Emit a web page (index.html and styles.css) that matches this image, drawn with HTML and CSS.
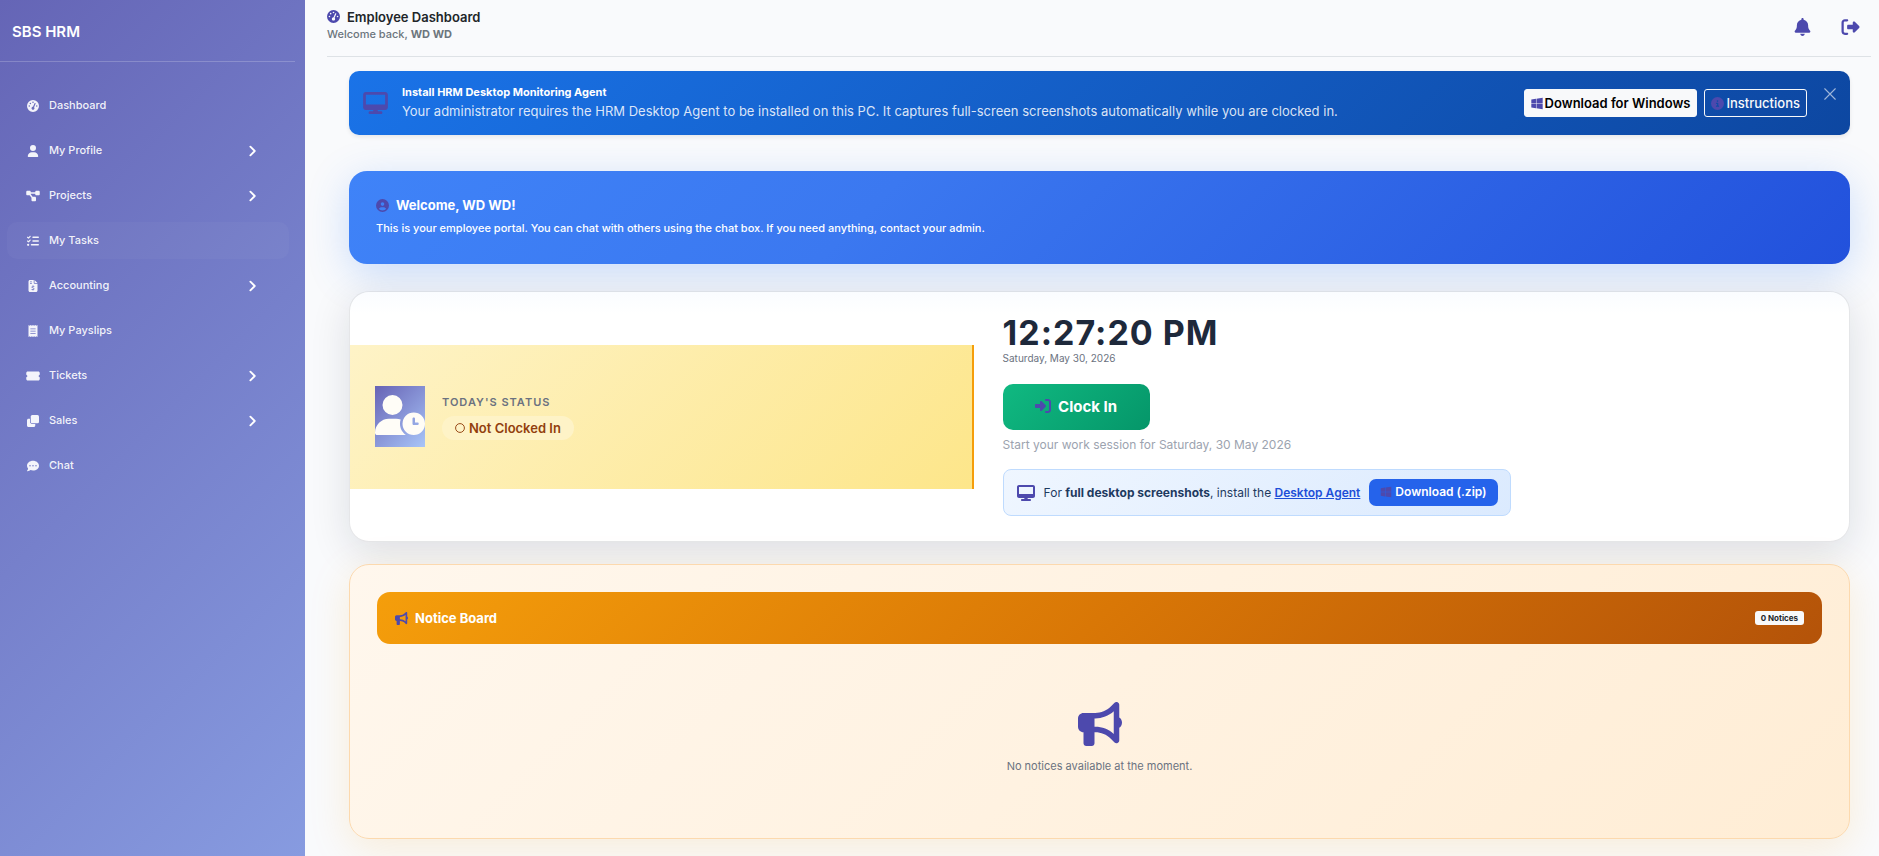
FILE: index.html
```html
<!DOCTYPE html>
<html lang="en">
<head>
    <meta charset="UTF-8">
    <meta name="viewport" content="width=device-width, initial-scale=1.0">
    <title>Employee Dashboard - SBS HRM</title>
    <link rel="stylesheet" href="styles.css">
</head>
<body>
    <!-- Icon sprite -->
    <svg class="sprite" aria-hidden="true">
        <symbol id="i-gauge" viewBox="0 0 512 512"><path d="M0 256a256 256 0 1 1 512 0A256 256 0 1 1 0 256zM288 96a32 32 0 1 0 -64 0 32 32 0 1 0 64 0zM256 416c35.3 0 64-28.7 64-64c0-17.4-6.9-33.1-18.1-44.6L366 161.7c5.3-12.1-.2-26.3-12.3-31.6s-26.3 .2-31.6 12.3L257.9 288c-.6 0-1.3 0-1.9 0c-35.3 0-64 28.7-64 64s28.7 64 64 64zM176 144a32 32 0 1 0 -64 0 32 32 0 1 0 64 0zM96 288a32 32 0 1 0 0-64 32 32 0 1 0 0 64zm352-32a32 32 0 1 0 -64 0 32 32 0 1 0 64 0z"/></symbol>
        <symbol id="i-user" viewBox="0 0 448 512"><path d="M224 256A128 128 0 1 0 224 0a128 128 0 1 0 0 256zm-45.7 48C79.8 304 0 383.8 0 482.3C0 498.7 13.3 512 29.7 512l388.6 0c16.4 0 29.7-13.3 29.7-29.7C448 383.8 368.2 304 269.7 304l-91.4 0z"/></symbol>
        <symbol id="i-project" viewBox="0 0 576 512"><path d="M0 80C0 53.5 21.5 32 48 32l96 0c26.5 0 48 21.5 48 48l0 16 192 0 0-16c0-26.5 21.5-48 48-48l96 0c26.5 0 48 21.5 48 48l0 96c0 26.5-21.5 48-48 48l-96 0c-26.5 0-48-21.5-48-48l0-16-192 0 0 16c0 1.7-.1 3.4-.3 5L272 288l96 0c26.5 0 48 21.5 48 48l0 96c0 26.5-21.5 48-48 48l-96 0c-26.5 0-48-21.5-48-48l0-96c0-1.7 .1-3.4 .3-5L144 224l-96 0c-26.5 0-48-21.5-48-48L0 80z"/></symbol>
        <symbol id="i-tasks" viewBox="0 0 512 512"><path d="M152.1 38.2c9.9 8.9 10.7 24 1.8 33.9l-72 80c-4.4 4.9-10.6 7.8-17.2 7.9s-12.9-2.4-17.6-7L7 113C-2.3 103.6-2.3 88.4 7 79s24.6-9.4 33.9 0l22.1 22.1 55.1-61.2c8.9-9.9 24-10.7 33.9-1.8zm0 160c9.9 8.9 10.7 24 1.8 33.9l-72 80c-4.4 4.9-10.6 7.8-17.2 7.9s-12.9-2.4-17.6-7L7 273c-9.4-9.4-9.4-24.6 0-33.9s24.6-9.4 33.9 0l22.1 22.1 55.1-61.2c8.9-9.9 24-10.7 33.9-1.8zM224 96c0-17.7 14.3-32 32-32l224 0c17.7 0 32 14.3 32 32s-14.3 32-32 32l-224 0c-17.7 0-32-14.3-32-32zm0 160c0-17.7 14.3-32 32-32l224 0c17.7 0 32 14.3 32 32s-14.3 32-32 32l-224 0c-17.7 0-32-14.3-32-32zM160 416c0-17.7 14.3-32 32-32l288 0c17.7 0 32 14.3 32 32s-14.3 32-32 32l-288 0c-17.7 0-32-14.3-32-32zM48 368a48 48 0 1 1 0 96 48 48 0 1 1 0-96z"/></symbol>
        <symbol id="i-invoice" viewBox="0 0 384 512"><path fill-rule="evenodd" d="M64 0C28.7 0 0 28.7 0 64v384c0 35.3 28.7 64 64 64h256c35.3 0 64-28.7 64-64V160H256c-17.7 0-32-14.3-32-32V0H64zM256 0v128h128L256 0zM64 64h80v32H64V64zM64 128h80v32H64v-32zM176 224h32v28h40v36h-80c-14 0-14 24 0 26l48 12c56 14 48 88-8 94v28h-32v-28h-48v-36h84c16 0 18-22 2-26l-48-12c-54-14-46-86 10-94v-28z"/></symbol>
        <symbol id="i-receipt" viewBox="0 0 384 512"><path fill-rule="evenodd" d="M0 0l48 36L96 0l48 36 48-36 48 36 48-36 48 36 48-36v512l-48-36-48 36-48-36-48 36-48-36-48 36-48-36-48 36V0zM80 144v32h224v-32H80zM80 240v32h224v-32H80zM80 336v32h224v-32H80z"/></symbol>
        <symbol id="i-ticket" viewBox="0 0 576 512"><path d="M0 128C0 92.7 28.7 64 64 64l448 0c35.3 0 64 28.7 64 64l0 64c0 8.8-7.4 15.7-15.7 18.6C541.5 217.1 528 235 528 256s13.5 38.9 32.3 45.4c8.3 2.9 15.7 9.8 15.7 18.6l0 64c0 35.3-28.7 64-64 64L64 448c-35.3 0-64-28.7-64-64l0-64c0-8.8 7.4-15.7 15.7-18.6C34.5 294.9 48 277 48 256s-13.5-38.9-32.3-45.4C7.4 207.7 0 200.8 0 192l0-64z"/></symbol>
        <symbol id="i-clone" viewBox="0 0 512 512"><rect x="160" width="352" height="352" rx="64"/><path d="M128 160H64c-35.3 0-64 28.7-64 64v224c0 35.3 28.7 64 64 64h224c35.3 0 64-28.7 64-64v-64H224c-53 0-96-43-96-96V160z"/></symbol>
        <symbol id="i-comment" viewBox="0 0 512 512"><path d="M256 448c141.4 0 256-93.1 256-208S397.4 32 256 32S0 125.1 0 240c0 45.1 17.7 86.8 47.7 120.9c-1.9 24.5-11.4 46.3-21.4 62.9c-5.5 9.2-11.1 16.6-15.2 21.6c-2.1 2.5-3.7 4.4-4.9 5.7c-4.6 4.6-7.5 12.4-5 18.7c2.5 6 8.3 9.9 14.8 9.9c28.7 0 57.6-8.9 81.6-19.3c22.9-10 42.4-21.9 54.3-30.6c31.8 11.5 67 17.9 104.1 17.9zM128 208a32 32 0 1 1 0 64 32 32 0 1 1 0-64zm128 0a32 32 0 1 1 0 64 32 32 0 1 1 0-64zm96 32a32 32 0 1 1 64 0 32 32 0 1 1 -64 0z"/></symbol>
        <symbol id="i-chevron" viewBox="0 0 320 512"><path d="M64 96l160 160L64 416" fill="none" stroke="currentColor" stroke-width="68" stroke-linecap="round" stroke-linejoin="round"/></symbol>
        <symbol id="i-desktop" viewBox="0 0 576 512"><path d="M64 0C28.7 0 0 28.7 0 64L0 352c0 35.3 28.7 64 64 64l176 0-10.7 32L160 448c-17.7 0-32 14.3-32 32s14.3 32 32 32l256 0c17.7 0 32-14.3 32-32s-14.3-32-32-32l-69.3 0L336 416l176 0c35.3 0 64-28.7 64-64l0-288c0-35.3-28.7-64-64-64L64 0zM512 64l0 224L64 288 64 64l448 0z"/></symbol>
        <symbol id="i-windows" viewBox="0 0 448 512"><path d="M0 93.7l183.6-25.3v177.4H0V93.7zm0 324.6l183.6 25.3V268.4H0v149.9zm203.8 28L448 480V268.4H203.8v177.9zm0-380.6v180.1H448V32L203.8 65.7z"/></symbol>
        <symbol id="i-info" viewBox="0 0 512 512"><path d="M256 512A256 256 0 1 0 256 0a256 256 0 1 0 0 512zM216 336l24 0 0-64-24 0c-13.3 0-24-10.7-24-24s10.7-24 24-24l48 0c13.3 0 24 10.7 24 24l0 88 8 0c13.3 0 24 10.7 24 24s-10.7 24-24 24l-80 0c-13.3 0-24-10.7-24-24s10.7-24 24-24zm40-208a32 32 0 1 1 0 64 32 32 0 1 1 0-64z"/></symbol>
        <symbol id="i-close" viewBox="0 0 16 16"><path d="M1 1l14 14M15 1L1 15" fill="none" stroke="currentColor" stroke-width="1.5" stroke-linecap="round"/></symbol>
        <symbol id="i-bell" viewBox="0 0 448 512"><path d="M224 0c-17.7 0-32 14.3-32 32l0 19.2C119 66 64 130.6 64 208l0 18.8c0 47-17.3 92.4-48.5 127.6l-7.4 8.3c-8.4 9.4-10.4 22.9-5.3 34.4S19.4 416 32 416l384 0c12.6 0 24-7.4 29.2-18.9s3.1-25-5.3-34.4l-7.4-8.3C401.3 319.2 384 273.9 384 226.8l0-18.8c0-77.4-55-142-128-156.8L256 32c0-17.7-14.3-32-32-32zm45.3 493.3c12-12 18.7-28.3 18.7-45.3l-64 0-64 0c0 17 6.7 33.3 18.7 45.3s28.3 18.7 45.3 18.7s33.3-6.7 45.3-18.7z"/></symbol>
        <symbol id="i-signout" viewBox="0 0 512 512"><path d="M377.9 105.9L500.7 228.7c7.2 7.2 11.3 17.1 11.3 27.3s-4.1 20.1-11.3 27.3L377.9 406.1c-6.4 6.4-15 9.9-24 9.9c-18.7 0-33.9-15.2-33.9-33.9l0-62.1-128 0c-17.7 0-32-14.3-32-32l0-64c0-17.7 14.3-32 32-32l128 0 0-62.1c0-18.7 15.2-33.9 33.9-33.9c9 0 17.6 3.6 24 9.9zM160 96L96 96c-17.7 0-32 14.3-32 32l0 256c0 17.7 14.3 32 32 32l64 0c17.7 0 32 14.3 32 32s-14.3 32-32 32l-64 0c-53 0-96-43-96-96L0 128C0 75 43 32 96 32l64 0c17.7 0 32 14.3 32 32s-14.3 32-32 32z"/></symbol>
        <symbol id="i-signin" viewBox="0 0 512 512"><path d="M217.9 105.9L340.7 228.7c7.2 7.2 11.3 17.1 11.3 27.3s-4.1 20.1-11.3 27.3L217.9 406.1c-6.4 6.4-15 9.9-24 9.9c-18.7 0-33.9-15.2-33.9-33.9l0-62.1L32 320c-17.7 0-32-14.3-32-32l0-64c0-17.7 14.3-32 32-32l128 0 0-62.1c0-18.7 15.2-33.9 33.9-33.9c9 0 17.6 3.6 24 9.9zM352 416l64 0c17.7 0 32-14.3 32-32l0-256c0-17.7-14.3-32-32-32l-64 0c-17.7 0-32-14.3-32-32s14.3-32 32-32l64 0c53 0 96 43 96 96l0 256c0 53-43 96-96 96l-64 0c-17.7 0-32-14.3-32-32s14.3-32 32-32z"/></symbol>
        <symbol id="i-circle-user" viewBox="0 0 512 512"><path d="M399 384.2C376.9 345.8 335.4 320 288 320l-64 0c-47.4 0-88.9 25.8-111 64.2c35.2 39.2 86.2 63.8 143 63.8s107.8-24.7 143-63.8zM0 256a256 256 0 1 1 512 0A256 256 0 1 1 0 256zm256 16a72 72 0 1 0 0-144 72 72 0 1 0 0 144z"/></symbol>
        <symbol id="i-user-clock" viewBox="0 0 640 512"><path d="M224 0a128 128 0 1 1 0 256A128 128 0 1 1 224 0zM178.3 304h91.4c20.6 0 40.4 3.5 58.8 9.9C323 331 320 349.1 320 368c0 59.5 29.5 112.1 74.8 144H29.7C13.3 512 0 498.7 0 482.3C0 383.8 79.8 304 178.3 304zM352 368a144 144 0 1 1 288 0 144 144 0 1 1-288 0zm144-80c-8.8 0-16 7.2-16 16v64c0 8.8 7.2 16 16 16h48c8.8 0 16-7.2 16-16s-7.2-16-16-16H512V304c0-8.8-7.2-16-16-16z"/></symbol>
        <symbol id="i-circle" viewBox="0 0 512 512"><circle cx="256" cy="256" r="226" fill="none" stroke="currentColor" stroke-width="48"/></symbol>
        <symbol id="i-bullhorn" viewBox="0 0 512 512"><path d="M480 32c0-12.9-7.8-24.6-19.8-29.6s-25.7-2.2-34.9 6.9L381.7 53c-48 48-113.1 75-181 75l-8.7 0-32 0-96 0c-35.3 0-64 28.7-64 64l0 96c0 35.3 28.7 64 64 64l0 128c0 17.7 14.3 32 32 32l64 0c17.7 0 32-14.3 32-32l0-128 8.7 0c67.9 0 133 27 181 75l43.6 43.6c9.2 9.2 22.9 11.9 34.9 6.9s19.8-16.6 19.8-29.6l0-147.6c18.6-8.8 32-32.5 32-60.4s-13.4-51.6-32-60.4L480 32zm-64 76.7L416 240l0 131.3C357.2 317.8 280.5 288 200.7 288l-8.7 0 0-96 8.7 0c79.8 0 156.5-29.8 215.3-83.3z"/></symbol>
    </svg>

    <div class="layout">
        <aside class="sidebar">
            <div class="brand">SBS HRM</div>
            <nav class="menu">
                <a href="#"><svg class="icon"><use href="#i-gauge"/></svg><span>Dashboard</span></a>
                <a href="#"><svg class="icon"><use href="#i-user"/></svg><span>My Profile</span><svg class="arrow"><use href="#i-chevron"/></svg></a>
                <a href="#"><svg class="icon"><use href="#i-project"/></svg><span>Projects</span><svg class="arrow"><use href="#i-chevron"/></svg></a>
                <a href="#" class="active"><svg class="icon"><use href="#i-tasks"/></svg><span>My Tasks</span></a>
                <a href="#"><svg class="icon"><use href="#i-invoice"/></svg><span>Accounting</span><svg class="arrow"><use href="#i-chevron"/></svg></a>
                <a href="#"><svg class="icon"><use href="#i-receipt"/></svg><span>My Payslips</span></a>
                <a href="#"><svg class="icon"><use href="#i-ticket"/></svg><span>Tickets</span><svg class="arrow"><use href="#i-chevron"/></svg></a>
                <a href="#"><svg class="icon"><use href="#i-clone"/></svg><span>Sales</span><svg class="arrow"><use href="#i-chevron"/></svg></a>
                <a href="#"><svg class="icon"><use href="#i-comment"/></svg><span>Chat</span></a>
            </nav>
        </aside>

        <main class="main">
            <header class="topbar">
                <div>
                    <h1><svg class="icon"><use href="#i-gauge"/></svg>Employee Dashboard</h1>
                    <p>Welcome back, <strong>WD WD</strong></p>
                </div>
                <div class="topbar-actions">
                    <button type="button" aria-label="Notifications"><svg><use href="#i-bell"/></svg></button>
                    <a href="#" aria-label="Log out"><svg><use href="#i-signout"/></svg></a>
                </div>
            </header>

            <div class="content">
                <!-- Desktop agent banner -->
                <section class="agent-banner">
                    <svg class="banner-icon"><use href="#i-desktop"/></svg>
                    <div class="banner-text">
                        <strong>Install HRM Desktop Monitoring Agent</strong>
                        <p>Your administrator requires the HRM Desktop Agent to be installed on this PC. It captures full-screen screenshots automatically while you are clocked in.</p>
                    </div>
                    <a href="#" class="btn btn-light"><svg><use href="#i-windows"/></svg>Download for Windows</a>
                    <button type="button" class="btn btn-outline"><svg><use href="#i-info"/></svg>Instructions</button>
                    <button type="button" class="btn-close" aria-label="Close"><svg><use href="#i-close"/></svg></button>
                </section>

                <section class="welcome">
                    <h2><svg class="icon"><use href="#i-circle-user"/></svg>Welcome, WD WD!</h2>
                    <p>This is your employee portal. You can chat with others using the chat box. If you need anything, contact your admin.</p>
                </section>

                <!-- Attendance -->
                <section class="attendance">
                    <div class="status">
                        <div class="avatar"><svg><use href="#i-user-clock"/></svg></div>
                        <div>
                            <div class="status-label">TODAY'S STATUS</div>
                            <span class="status-pill"><svg><use href="#i-circle"/></svg>Not Clocked In</span>
                        </div>
                    </div>
                    <div class="clock">
                        <div class="clock-time">12:27:20 PM</div>
                        <div class="clock-date">Saturday, May 30, 2026</div>
                        <button type="button" class="clock-btn"><svg><use href="#i-signin"/></svg>Clock In</button>
                        <p class="clock-hint">Start your work session for Saturday, 30 May 2026</p>
                        <div class="agent-box">
                            <svg><use href="#i-desktop"/></svg>
                            <span>For <strong>full desktop screenshots</strong>, install the <a href="#">Desktop Agent</a></span>
                            <a href="#" class="zip-btn"><svg><use href="#i-windows"/></svg>Download (.zip)</a>
                        </div>
                    </div>
                </section>

                <!-- Notice board -->
                <section class="notices">
                    <div class="notices-header">
                        <h2><svg class="icon"><use href="#i-bullhorn"/></svg>Notice Board</h2>
                        <span class="badge">0 Notices</span>
                    </div>
                    <div class="notices-empty">
                        <svg><use href="#i-bullhorn"/></svg>
                        <p>No notices available at the moment.</p>
                    </div>
                </section>
            </div>
        </main>
    </div>
</body>
</html>
```
FILE: styles.css
```css
* { box-sizing: border-box; }
body { margin: 0; font-family: Inter, "Liberation Sans", sans-serif; font-size: 13px; color: #212529; background: #f9fafc; }
h1, h2, p { margin: 0; }
svg { fill: currentColor; flex-shrink: 0; }
a { color: inherit; text-decoration: none; }
button { font-family: inherit; cursor: pointer; }
.sprite { position: absolute; width: 0; height: 0; }
.icon { width: 13px; height: 13px; }

.layout { display: flex; min-height: 100vh; }

/* Sidebar */
.sidebar { width: 305px; flex-shrink: 0; padding-right: 10px; color: #fff; background: linear-gradient(135deg, #6565b6 0%, #879be0 100%); }
.brand { height: 62px; padding: 22px 12px 0; font-size: 15px; line-height: 20px; font-weight: 600; border-bottom: 1px solid rgba(255, 255, 255, 0.2); }
.menu { display: flex; flex-direction: column; gap: 8px; padding: 25px 6px 0 7px; }
.menu a { display: flex; align-items: center; height: 37px; padding: 0 31px 0 19px; border-radius: 10px; font-size: 11px; font-weight: 500; color: rgba(255, 255, 255, 0.92); }
.menu a.active { background: rgba(255, 255, 255, 0.03); }
.menu span { padding-bottom: 2px; }
.menu .icon { width: 14px; height: 12px; margin-right: 9px; }
.menu .arrow { width: 10px; height: 14px; margin-left: auto; color: #fff; }

/* Top bar */
.main { flex: 1; min-width: 0; padding: 0 8px 0 22px; }
.topbar { display: flex; justify-content: space-between; align-items: center; height: 57px; padding: 0 11px 2px 0; border-bottom: 1px solid #dee2e6; }
.topbar h1 { display: flex; align-items: center; gap: 7px; font-size: 13px; line-height: 18px; font-weight: 600; }
.topbar p { margin-bottom: 4px; font-size: 11px; line-height: 17px; font-weight: 500; color: #6c757d; }
.topbar h1 .icon, .topbar-actions, .agent-banner svg, .welcome svg, .clock-btn svg, .agent-box svg, .notices svg { color: #4d49ad; }
.topbar-actions { display: flex; align-items: center; gap: 29px; }
.topbar-actions button { padding: 0; border: 0; background: none; color: inherit; }
.topbar-actions svg { display: block; width: 19px; height: 18px; }

.content { padding: 14px 21px 18px 22px; }

/* Desktop agent banner */
.agent-banner { display: flex; align-items: center; min-height: 64px; padding: 0 14px; border-radius: 10px; color: #fff; background: linear-gradient(135deg, #1a73e8, #0d47a1); box-shadow: 0 2px 4px rgba(0, 0, 0, 0.08); }
.banner-icon { width: 25px; height: 22px; margin-right: 14px; }
.banner-text { flex: 1; }
.banner-text strong { display: block; font-size: 11px; line-height: 16px; font-weight: 700; }
.banner-text p { font-size: 13px; line-height: 22px; color: rgba(255, 255, 255, 0.85); }
.btn { display: inline-flex; align-items: center; gap: 2px; height: 28px; padding: 0 6px; border: 1px solid #f8f9fa; border-radius: 3px; font-size: 13px; font-weight: 600; }
.btn svg { width: 12px; height: 13px; }
.btn-light { color: #000; background: #f8f9fa; }
.btn-outline { margin-left: 7px; color: #f8f9fa; background: none; font-weight: 500; }
.btn-outline svg { width: 13px; }
.agent-banner .btn-close { align-self: flex-start; margin: 17px 0 0 17px; padding: 0; border: 0; background: none; }
.agent-banner .btn-close svg { display: block; width: 12px; height: 12px; color: rgba(255, 255, 255, 0.6); }

/* Welcome */
.welcome { margin-top: 36px; padding: 23px 27px 26px; border-radius: 18px; color: #fff; background: linear-gradient(135deg, #3f83f8 0%, #3b78f0 35%, #2251dc 100%); box-shadow: 0 10px 40px rgba(59, 130, 246, 0.25); }
.welcome h2 { display: flex; align-items: center; gap: 7px; margin-bottom: 2px; font-size: 13px; line-height: 22px; font-weight: 700; }
.welcome p { font-size: 11px; line-height: 20px; font-weight: 500; }

/* Attendance */
.attendance { display: flex; align-items: center; margin-top: 27px; border: 1px solid rgba(0, 0, 0, 0.08); border-radius: 20px; background: linear-gradient(#fafcff, #fff 22px); background-clip: padding-box; box-shadow: 0 10px 40px rgba(15, 23, 42, 0.12); }
.status { display: flex; align-items: center; gap: 17px; width: 41.6%; height: 144px; padding: 0 25px; border-right: 2px solid #f59e0b; background: linear-gradient(135deg, #fef3c7 0%, #fde68a 100%); }
.avatar { padding: 9px 0 12px; background: linear-gradient(135deg, #6763b5, #a8c5f8); }
.avatar svg { display: block; width: 50px; height: 40px; color: #fffdf7; }
.status-label { margin-bottom: 6px; font-size: 11px; line-height: 16px; font-weight: 600; letter-spacing: 1px; color: #6b7280; }
.status-pill { display: inline-flex; align-items: center; gap: 4px; height: 24px; padding: 0 13px; border-radius: 12px; font-size: 13px; font-weight: 600; color: #92400e; background: #fef3c7; }
.status-pill svg { width: 10px; height: 10px; }
.clock { padding: 20px 29px 25px; }
.clock-time { font-size: 34px; line-height: 42px; font-weight: 700; letter-spacing: 1px; color: #1e293b; }
.clock-date { font-size: 10px; line-height: 8px; color: #6b7280; }
.clock-btn { display: flex; align-items: center; justify-content: center; gap: 7px; width: 147px; height: 46px; margin-top: 22px; padding: 0 0 2px; border: 0; border-radius: 10px; font-size: 15px; font-weight: 700; color: #fff; background: linear-gradient(135deg, #10b981, #059669); }
.clock-btn svg { width: 16px; height: 16px; }
.clock-hint { margin: 5px 0 15px; font-size: 12px; line-height: 19px; color: #9ca3af; }
.agent-box { display: flex; align-items: center; gap: 9px; height: 47px; padding: 0 12px 0 13px; border: 1px solid #bfdbfe; border-radius: 8px; font-size: 12px; color: #1e3a5f; background: linear-gradient(135deg, #eff6ff, #dbeafe); }
.agent-box svg { width: 18px; height: 16px; }
.agent-box span a { font-weight: 600; color: #1d4ed8; text-decoration: underline; }
.agent-box .zip-btn { display: inline-flex; align-items: center; gap: 3px; height: 27px; padding: 0 11px 2px; border-radius: 7px; font-weight: 600; color: #fff; background: #2563eb; }
.agent-box .zip-btn svg { width: 12px; height: 12px; }

/* Notice board */
.notices { margin-top: 22px; padding: 27px; border: 1px solid #fcd9ae; border-radius: 20px; background: linear-gradient(135deg, #fff7ed, #ffedd5); box-shadow: 0 10px 40px rgba(245, 158, 11, 0.15); }
.notices-header { display: flex; justify-content: space-between; align-items: center; height: 52px; padding: 0 18px; border-radius: 13px; background: linear-gradient(135deg, #f59e0b 0%, #d97706 50%, #b45309 100%); }
.notices-header h2 { display: flex; align-items: center; gap: 7px; font-size: 13px; font-weight: 700; color: #fff; }
.badge { padding: 0 6px; border-radius: 3px; font-size: 8px; line-height: 14px; font-weight: 700; color: #212529; background: #f8f9fa; }
.notices-empty { display: flex; flex-direction: column; align-items: center; padding: 58px 0 36px; }
.notices-empty svg { width: 44px; height: 44px; }
.notices-empty p { margin-top: 12px; font-size: 11px; line-height: 17px; color: #6b7280; }
```
